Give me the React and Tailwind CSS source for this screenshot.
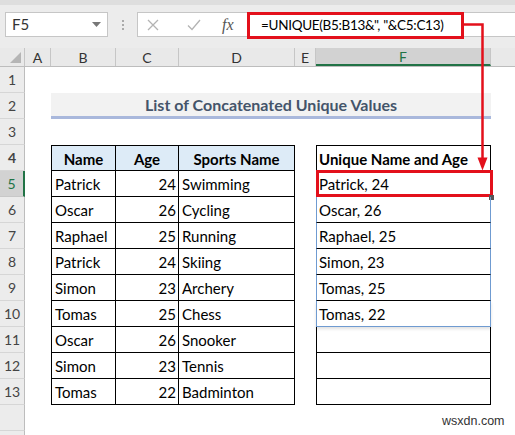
import React from 'react';

const rows = [
  ['Patrick', 24, 'Swimming', 'Patrick, 24'],
  ['Oscar', 26, 'Cycling', 'Oscar, 26'],
  ['Raphael', 25, 'Running', 'Raphael, 25'],
  ['Patrick', 24, 'Skiing', 'Simon, 23'],
  ['Simon', 23, 'Archery', 'Tomas, 25'],
  ['Tomas', 25, 'Chess', 'Tomas, 22'],
  ['Oscar', 26, 'Snooker', ''],
  ['Simon', 23, 'Tennis', ''],
  ['Tomas', 22, 'Badminton', ''],
];

const RowHead = ({ n, selected }) => (
  <div
    className={
      selected
        ? 'w-[25px] shrink-0 flex items-center justify-center bg-[#d2d2d2] border-r-2 border-r-[#217346] border-b border-b-[#c8c8c8] text-[#217346] text-[14px]'
        : 'w-[25px] shrink-0 flex items-center justify-center bg-[#ececec] border-r border-r-[#bdbdbd] border-b border-b-[#d6d6d6] text-[#444] text-[14px]'
    }
  >
    {n}
  </div>
);

const Gap = ({ w }) => <div className={w + ' shrink-0'} />;

export default function App() {
  return (
    <div className="relative w-[515px] h-[435px] overflow-hidden bg-white [font-family:Lato,sans-serif] text-black">
      {/* formula bar */}
      <div className="h-[48px] bg-[#ececec] border-t-[5px] border-t-[#dedede] flex items-start pt-[7px] pl-[5px]">
        <div className="w-[103px] h-[25px] bg-white border border-[#c6c6c6] flex items-center justify-between px-[6px]">
          <span className="text-[15px] text-[#333]">F5</span>
          <svg width="9" height="5" viewBox="0 0 9 5"><path d="M0 0h9L4.5 5z" fill="#777" /></svg>
        </div>
        <div className="w-[29px] h-[25px] flex flex-col items-center justify-center gap-[2px]">
          <span className="w-[2px] h-[2px] bg-[#aaa]" />
          <span className="w-[2px] h-[2px] bg-[#aaa]" />
          <span className="w-[2px] h-[2px] bg-[#aaa]" />
        </div>
        <div className="flex-1 h-[25px] bg-white border border-[#c6c6c6] border-r-0 flex items-center">
          <div className="w-[110px] shrink-0 flex items-center pl-[9px]">
            <svg width="12" height="12" viewBox="0 0 12 12"><path d="M1 1l10 10M11 1L1 11" stroke="#b3b3b3" strokeWidth="1.3" /></svg>
            <svg className="ml-[28px]" width="14" height="12" viewBox="0 0 14 12"><path d="M1 6.5l4 4L13 1" stroke="#b3b3b3" strokeWidth="1.3" fill="none" /></svg>
            <span className="ml-[21px] text-[16px] italic text-[#555] [font-family:'Liberation_Serif',serif]">fx</span>
          </div>
        </div>
      </div>

      {/* column headers */}
      <div className="flex h-[19px] bg-[#e9e9e9] border-b border-b-[#bdbdbd] text-[14px] text-[#333]">
        <div className="w-[25px] shrink-0 relative border-r border-r-[#c6c6c6]">
          <svg className="absolute right-[3px] bottom-[3px]" width="11" height="11" viewBox="0 0 11 11"><path d="M11 0v11H0z" fill="#b5b5b5" /></svg>
        </div>
        <div className="w-[26px] shrink-0 flex items-center justify-center border-r border-r-[#c6c6c6]">A</div>
        <div className="w-[65px] shrink-0 flex items-center justify-center border-r border-r-[#c6c6c6]">B</div>
        <div className="w-[63px] shrink-0 flex items-center justify-center border-r border-r-[#c6c6c6]">C</div>
        <div className="w-[116px] shrink-0 flex items-center justify-center border-r border-r-[#c6c6c6]">D</div>
        <div className="w-[21px] shrink-0 flex items-center justify-center border-r border-r-[#c6c6c6]">E</div>
        <div className="w-[175px] shrink-0 flex items-center justify-center bg-[#d2d2d2] border-b-2 border-b-[#217346] text-[#217346] border-r border-r-[#c6c6c6]">F</div>
        <div className="flex-1" />
      </div>

      {/* row 1 */}
      <div className="flex h-[26px]">
        <RowHead n={1} />
      </div>

      {/* row 2 title */}
      <div className="flex h-[26px]">
        <RowHead n={2} />
        <Gap w="w-[26px]" />
        <div className="w-[440px] shrink-0 bg-[#f2f2f2] border-b-[3px] border-b-[#a9b8dc] flex items-center justify-center font-bold text-[16px] text-[#44546a]">
          List of Concatenated Unique Values
        </div>
      </div>

      {/* row 3 */}
      <div className="flex h-[26px]">
        <RowHead n={3} />
      </div>

      {/* row 4 header */}
      <div className="flex h-[26px] text-[15px] font-bold">
        <RowHead n={4} />
        <Gap w="w-[26px]" />
        <div className="w-[65px] shrink-0 bg-[#ddebf7] border border-black flex items-center justify-center pt-[2px]">Name</div>
        <div className="w-[63px] shrink-0 bg-[#ddebf7] border-y border-r border-black flex items-center justify-center pt-[2px]">Age</div>
        <div className="w-[116px] shrink-0 bg-[#ddebf7] border-y border-r border-black flex items-center justify-center pt-[2px]">Sports Name</div>
        <Gap w="w-[21px]" />
        <div className="w-[175px] shrink-0 border border-black flex items-center pl-[2px] pt-[2px]">Unique Name and Age</div>
      </div>

      {rows.map((r, i) => {
        const n = i + 5;
        const spill = n <= 10;
        let fCls = 'border-x border-b border-black';
        if (spill) fCls = 'border-x border-x-[#6f9bd1] border-b border-b-black';
        if (n === 10) fCls = 'border-x border-x-[#6f9bd1] border-b border-b-[#6f9bd1] shadow-[0_2px_3px_rgba(0,0,0,0.12)]';
        return (
          <div key={n} className="flex h-[26px] text-[15px]">
            <RowHead n={n} selected={n === 5} />
            <Gap w="w-[26px]" />
            <div className="w-[65px] shrink-0 border-x border-b border-black flex items-center pl-[3px] pt-[2px]">{r[0]}</div>
            <div className="w-[63px] shrink-0 border-r border-b border-black flex items-center justify-end pr-[2px] pt-[2px]">{r[1]}</div>
            <div className="w-[116px] shrink-0 border-r border-b border-black flex items-center pl-[3px] pt-[2px]">{r[2]}</div>
            <Gap w="w-[21px]" />
            <div className={'relative w-[175px] shrink-0 flex items-center pl-[2px] pt-[2px] ' + fCls}>
              {r[3]}
              {n === 5 && (
                <>
                  <div className="absolute -left-[1px] -top-[1px] w-[177px] h-[27px] border-[3px] border-[#e3101b]" />
                  <div className="absolute -right-[4px] -bottom-[4px] w-[5px] h-[5px] bg-[#555]" />
                </>
              )}
            </div>
          </div>
        );
      })}

      {/* rows 14-15 */}
      <div className="flex h-[26px]">
        <RowHead n="" />
      </div>
      <div className="flex h-[26px]">
        <RowHead n="" />
      </div>

      {/* formula text box annotation */}
      <div className="absolute left-[247px] top-[12px] w-[217px] h-[27px] border-[3px] border-[#e3101b] bg-white flex items-center pl-[11px] text-[13.5px] tracking-[-0.3px] text-black whitespace-nowrap">
        =UNIQUE(B5:B13&amp;", "&amp;C5:C13)
      </div>

      {/* arrow */}
      <svg className="absolute left-0 top-0 pointer-events-none" width="515" height="435" viewBox="0 0 515 435">
        <path d="M464 24.5H482.5V160" stroke="#e3101b" strokeWidth="2.5" fill="none" />
        <path d="M477.5 157.5h10l-5 13z" fill="#e3101b" />
      </svg>

      <div className="absolute left-[442px] top-[412px] text-[12.5px] text-[#333] [font-family:'Liberation_Sans',sans-serif]">wsxdn.com</div>
    </div>
  );
}
